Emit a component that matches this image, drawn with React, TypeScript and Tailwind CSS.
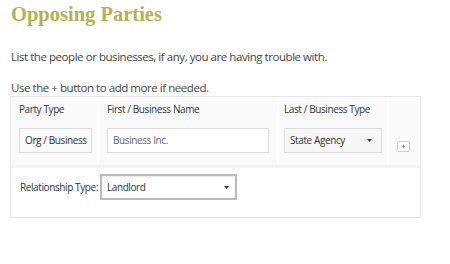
import React from "react";

const Caret = () => (
  <svg width="5" height="3" viewBox="0 0 5 3" className="shrink-0">
    <path d="M0 0 L5 0 L2.5 3 Z" fill="#333" />
  </svg>
);

export default function App() {
  return (
    <div className="w-[450px] h-[264px] bg-white overflow-hidden" style={{ fontFamily: '"Open Sans", sans-serif' }}>
      <h1
        className="pl-[11px] text-[20.5px] leading-[28px] font-bold text-[#b4b150]"
        style={{ fontFamily: '"Liberation Serif", serif' }}
      >
        Opposing Parties
      </h1>
      <p className="pl-[11px] mt-[21px] text-[11.5px] tracking-[-0.45px] leading-[16px] text-[#444]">
        List the people or businesses, if any, you are having trouble with.
      </p>
      <p className="pl-[11px] mt-[15px] text-[11.5px] tracking-[-0.45px] leading-[16px] text-[#444]">
        Use the + button to add more if needed.
      </p>
      <div className="ml-[10px] w-[411px] h-[122px] border border-[#e8e8e8] flex flex-col text-[10px] tracking-[-0.4px]">
        <div className="flex gap-[2px] px-[1px] h-[68px]">
          <div className="w-[85px] bg-[#fafafa] flex flex-col pl-[7px]">
            <div className="h-[31px] pt-[6px] leading-[12px] text-[#333]">Party Type</div>
            <div className="w-[73px] h-[25px] border border-[#ddd] bg-[#fafafa] flex items-center pl-[5px] text-[#333] overflow-hidden whitespace-nowrap">
              Org / Business
            </div>
          </div>
          <div className="w-[178px] bg-[#fafafa] flex flex-col pl-[8px]">
            <div className="h-[31px] pt-[6px] leading-[12px] text-[#333]">First / Business Name</div>
            <div className="w-[162px] h-[25px] border border-[#ddd] bg-white flex items-center pl-[5px] text-[#666] whitespace-nowrap">
              Business Inc.
            </div>
          </div>
          <div className="w-[108px] bg-[#fafafa] flex flex-col pl-[5px]">
            <div className="h-[31px] pt-[6px] leading-[12px] text-[#333] whitespace-nowrap">Last / Business Type</div>
            <div className="w-[98px] h-[25px] border border-[#ddd] bg-[#f7f7f7] flex items-center justify-between pl-[5px] pr-[9px] text-[#333] whitespace-nowrap">
              <span>State Agency</span>
              <Caret />
            </div>
          </div>
          <div className="flex-1 bg-[#fafafa] flex flex-col">
            <div className="h-[44px]" />
            <div className="ml-[8px] w-[13px] h-[11px] border border-[#ccc] rounded-[2px] bg-white flex items-center justify-center text-[7px] tracking-normal leading-none text-[#333]">
              +
            </div>
          </div>
        </div>
        <div className="h-[3px] bg-[#f3f3f3]" />
        <div className="flex items-center pl-[9px] pt-[6px]">
          <span className="text-[#333] mr-[2px]">Relationship Type:</span>
          <div className="w-[137px] h-[26px] border-2 border-[#bbb] bg-white flex items-center justify-between pl-[5px] pr-[6px] text-[#333] shadow-[inset_0_1px_2px_rgba(0,0,0,0.1)]">
            <span>Landlord</span>
            <Caret />
          </div>
        </div>
      </div>
    </div>
  );
}
